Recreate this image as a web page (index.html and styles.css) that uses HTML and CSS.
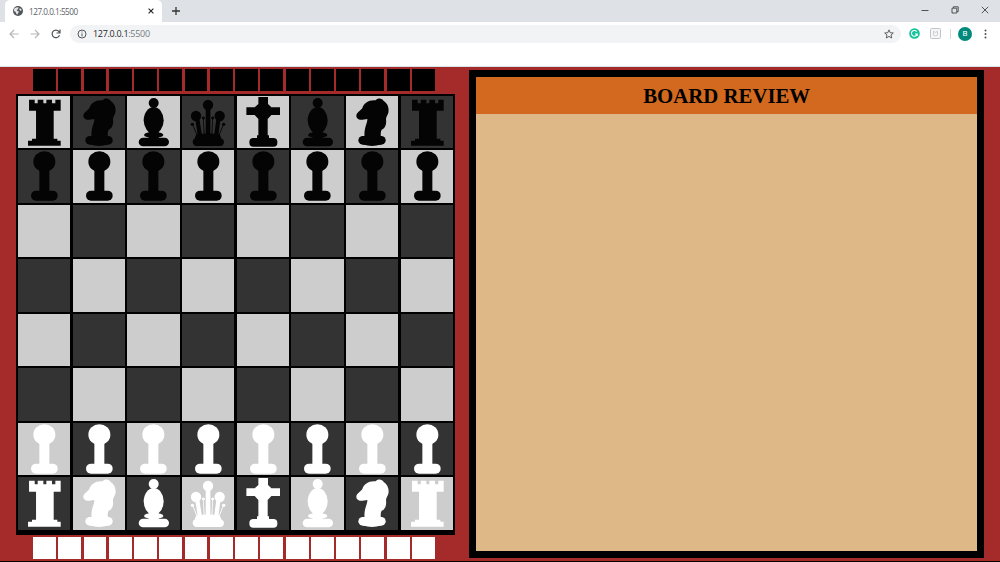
FILE: index.html
```html
<!DOCTYPE html>
<html lang="en">
<head>
<meta charset="utf-8">
<title>127.0.0.1:5500</title>
<link rel="stylesheet" href="styles.css">
</head>
<body>
<svg class="defs" aria-hidden="true">
  <symbol id="rook" viewBox="0 0 157 157">
    <path d="M33 11H50V22H59V11H76V22H85V11H102V22H112V11H128V44H107V128H118V134H128V149H30V134H42V128H54V44H33Z"/>
  </symbol>
  <symbol id="knight" viewBox="-1 0 157 157">
    <path d="M30 58C31 49 43 44 48 36C53 21 67 11 88 13C93 5 108 5 112 15C124 22 129 37 126 50C123 59 119 62 119 70C121 84 117 98 106 101C102 108 103 117 104 128H55C53 112 55 100 58 90C61 81 63 76 63 69C53 69 48 73 40 71C33 69 29 65 30 58Z"/>
    <rect x="36" y="120" width="82" height="26" rx="13"/>
    <ellipse cx="77" cy="136" rx="36" ry="14"/>
  </symbol>
  <symbol id="bishop" viewBox="-2 -1 157 157">
    <circle cx="78" cy="20" r="15"/>
    <ellipse cx="78" cy="72" rx="30" ry="40"/>
    <ellipse cx="78" cy="116" rx="29" ry="9"/>
    <path d="M63 104H93V130H63Z"/>
    <rect x="33" y="124" width="91" height="26" rx="13"/>
  </symbol>
  <symbol id="queen" viewBox="-2 0 157 157">
    <circle cx="76" cy="27" r="15.500"/>
    <circle cx="40" cy="60" r="15.500"/>
    <circle cx="111" cy="60" r="15.500"/>
    <circle cx="62" cy="66" r="4.500"/>
    <circle cx="90" cy="66" r="4.500"/>
    <circle cx="29" cy="85" r="5"/>
    <circle cx="123" cy="85" r="5"/>
    <path d="M69 35H83V120H69ZM37 65L49 62L58 118H45ZM102 62L114 65L107 118H94ZM61 65H63L66 118H63ZM89 65H91L89 118H86ZM28 84L30 83L44 116H41ZM122 83L124 84L111 116H108Z"/>
    <path d="M37 127C37 115 47 112 54 114C61 112 69 112 76 113C83 112 91 112 98 114C105 112 115 115 115 127C128 131 126 150 113 150H42C28 150 26 131 37 127Z"/>
  </symbol>
  <symbol id="king" viewBox="0 0 157 157">
    <path d="M64 3H93V24L103 34H129V57H103L92 69V118H96V127H60V118H64V69L53 57H28V34H53L64 24Z"/>
    <rect x="37" y="126" width="84" height="26" rx="12"/>
  </symbol>
  <symbol id="pawn" viewBox="-1 0 157 157">
    <ellipse cx="78" cy="35" rx="33" ry="31"/>
    <path d="M63 58H93V130H63Z"/>
    <rect x="38" y="122" width="80" height="30" rx="15"/>
  </symbol>
</svg>

<header class="browser">
  <div class="tabstrip">
    <div class="tab">
      <svg class="globe" viewBox="0 0 16 16"><circle cx="8" cy="8" r="8" fill="#53575b"/><path d="M2 4L5 2.5L9 2L8 5L6 6L7 8L10 9L8 11L7 14L5 12L4 9L1.500 8ZM11 3L14 6L12.500 8L10 6Z" fill="#e4e6e8"/></svg>
      <span class="tab-title">127.0.0.1:5500</span>
      <svg class="tab-close" viewBox="0 0 6 6"><path d="M.6.6L5.400 5.400M5.400.6L.6 5.400"/></svg>
    </div>
    <svg class="new-tab" viewBox="0 0 8 8"><path d="M4 0V8M0 4H8"/></svg>
    <div class="window-buttons">
      <svg viewBox="0 0 8 8"><path d="M.5 4.500H7.500"/></svg>
      <svg viewBox="0 0 8 8"><path d="M1 2.200H5.800V7H1ZM2.400 2V.8H7.200V5.600H6"/></svg>
      <svg viewBox="0 0 8 8"><path d="M.8.8L7.200 7.200M7.200.8L.8 7.200"/></svg>
    </div>
  </div>
  <div class="toolbar">
    <svg class="nav dim" viewBox="0 0 10 10"><path d="M9.500 5H1M5 1L1 5L5 9"/></svg>
    <svg class="nav dim" viewBox="0 0 10 10"><path d="M.5 5H9M5 1L9 5L5 9"/></svg>
    <svg class="nav" viewBox="0 0 10 10"><path d="M8.500 6.200A3.800 3.800 0 1 1 7.800 2.400L8.700 3.500M9 .5V4H5.500"/></svg>
    <div class="address">
      <svg class="info" viewBox="0 0 10 10"><circle cx="5" cy="5" r="4"/><path d="M5 4.500V7.300M5 2.500V3.500"/></svg>
      <span class="url">127.0.0.1<span class="port">:5500</span></span>
      <svg class="star" viewBox="0 0 10 10"><path d="M5 .9L6.200 3.700L9.300 4L7 6L7.700 9L5 7.400L2.300 9L3 6L.7 4L3.800 3.700Z"/></svg>
    </div>
    <svg class="ext-g" viewBox="0 0 11 11"><circle cx="5.500" cy="5.500" r="5.300" fill="#15c39a"/><path d="M7.700 3.600A2.900 2.900 0 1 0 8.200 6H6M8.200 6V8" fill="none" stroke="#fff" stroke-width="1.100"/></svg>
    <svg class="ext-m" viewBox="0 0 11 11"><rect x=".5" y=".5" width="10" height="10" rx="1" fill="#f5f6f7" stroke="#bfc5ca"/><path d="M3.500 3.200V7L5.500 8L7.500 7V3.200L5.500 4.500Z" fill="none" stroke="#cdd1d4"/></svg>
    <span class="divider"></span>
    <span class="avatar">B</span>
    <svg class="menu" viewBox="0 0 3 10"><circle cx="1.500" cy="1.400" r="1"/><circle cx="1.500" cy="5" r="1"/><circle cx="1.500" cy="8.600" r="1"/></svg>
  </div>
</header>

<main class="game">
  <section class="play">
    <div class="tray tray-black"></div>
    <div class="board"></div>
    <div class="tray tray-white"></div>
  </section>
  <section class="review">
    <h1 class="review-title">BOARD REVIEW</h1>
  </section>
</main>
<script src="board.js"></script>
</body>
</html>
```

FILE: styles.css
```css
* { box-sizing: border-box; }

body {
  margin: 0;
  width: 1000px;
  height: 562px;
  overflow: hidden;
  display: flex;
  flex-direction: column;
  background: #fff;
  font-family: "Open Sans", "Noto Sans", sans-serif;
}

svg { display: block; flex: none; }
.defs { position: absolute; width: 0; height: 0; }

.browser {
  height: 67px;
  flex: none;
  border-bottom: 1px solid #d5e4e9;
}

.tabstrip {
  height: 22px;
  display: flex;
  align-items: center;
  padding-left: 5px;
  background: #dee1e6;
}

.tab {
  width: 157px;
  height: 22px;
  display: flex;
  align-items: center;
  padding: 0 8px;
  background: #fff;
  border-radius: 5px 5px 0 0;
}

.globe { width: 10px; height: 10px; }

.tab-title {
  flex: 1;
  margin-left: 6px;
  font-size: 8.2px;
  line-height: 11px;
  letter-spacing: -0.48px;
  color: #5b6066;
}

.tab-close { width: 6px; height: 6px; }
.tab-close path { stroke: #222; stroke-width: 1.1; }

.new-tab { width: 8px; height: 8px; margin-left: 10px; }
.new-tab path { stroke: #333; stroke-width: 1.3; }

.window-buttons {
  display: flex;
  gap: 22px;
  margin: -3px 11px 0 auto;
}
.window-buttons svg { width: 8px; height: 8px; fill: none; stroke: #444; stroke-width: 0.9; }

.toolbar {
  height: 23px;
  display: flex;
  align-items: center;
  padding: 0 12px 0 9px;
}

.nav { width: 10px; height: 10px; margin-right: 11px; fill: none; stroke: #505458; stroke-width: 1.2; }
.dim { stroke: #b5b7ba; }

.address {
  width: 831px;
  height: 18px;
  margin-left: -2px;
  display: flex;
  align-items: center;
  padding: 0 7px;
  border-radius: 9px;
  background: #f1f3f4;
}

.info { width: 10px; height: 10px; fill: none; stroke: #55595e; }
.url { flex: 1; margin-left: 6px; font-size: 9px; letter-spacing: -0.3px; color: #26282b; }
.port { color: #777c82; }
.star { width: 10px; height: 10px; fill: none; stroke: #4d5156; stroke-width: 0.9; }

.ext-g { width: 11px; height: 11px; margin-left: 8px; }
.ext-m { width: 11px; height: 11px; margin-left: 10px; }
.divider { width: 1px; height: 10px; margin-left: 9px; background: #d4d7da; }

.avatar {
  width: 14px;
  height: 14px;
  margin-left: 7px;
  border-radius: 50%;
  background: #00897b;
  color: #fff;
  font: 8px/14px Roboto, sans-serif;
  text-align: center;
}

.menu { width: 3px; height: 10px; margin-left: 12px; fill: #4d5156; }

.game {
  flex: 1;
  display: flex;
  align-items: flex-start;
  gap: 14.4px;
  padding: 2px 16px 0;
  background: #a52a2a;
  border-bottom: 1px solid #080000;
}

.play { width: 439px; flex: none; }

.tray {
  display: grid;
  grid-template-columns: repeat(16, 22.9px);
  grid-auto-rows: 22px;
  column-gap: 2.38px;
  margin-left: 17px;
}
.tray-black .slot { background: #000; }
.tray-white { margin-top: 2px; }
.tray-white .slot { background: #fff; }

.board {
  display: grid;
  grid-template-columns: repeat(8, 52.4px);
  grid-template-rows: repeat(8, 52.3px);
  gap: 2.2px 2.27px;
  height: 441px;
  margin-top: 3px;
  padding: 2px 2px 0;
  background: #000;
}

.light { background: #cdcdcd; }
.dark { background: #333; }
.piece { width: 100%; height: 100%; }
.black { fill: #040404; }
.white { fill: #fff; }

.review {
  width: 514.6px;
  height: 488px;
  margin-top: 1px;
  border: 7px solid #000;
  background: #deb887;
}

.review-title {
  margin: 0;
  height: 37px;
  background: #d2691e;
  color: #000;
  font: bold 20.8px/37px "Liberation Serif", serif;
  text-align: center;
}
```

FILE: board.js
```js
const backRank = ["rook", "knight", "bishop", "queen", "king", "bishop", "knight", "rook"];
const pawns = Array(8).fill("pawn");
const setup = { 0: ["black", backRank], 1: ["black", pawns], 6: ["white", pawns], 7: ["white", backRank] };

let squares = "";
for (let row = 0; row < 8; row++) {
  for (let col = 0; col < 8; col++) {
    const shade = (row + col) % 2 ? "dark" : "light";
    const rank = setup[row];
    const piece = rank
      ? `<svg class="piece ${rank[0]}"><use href="#${rank[1][col]}"/></svg>`
      : "";
    squares += `<div class="${shade}">${piece}</div>`;
  }
}
document.querySelector(".board").innerHTML = squares;

document.querySelectorAll(".tray").forEach((tray) => {
  tray.innerHTML = '<div class="slot"></div>'.repeat(16);
});
```
